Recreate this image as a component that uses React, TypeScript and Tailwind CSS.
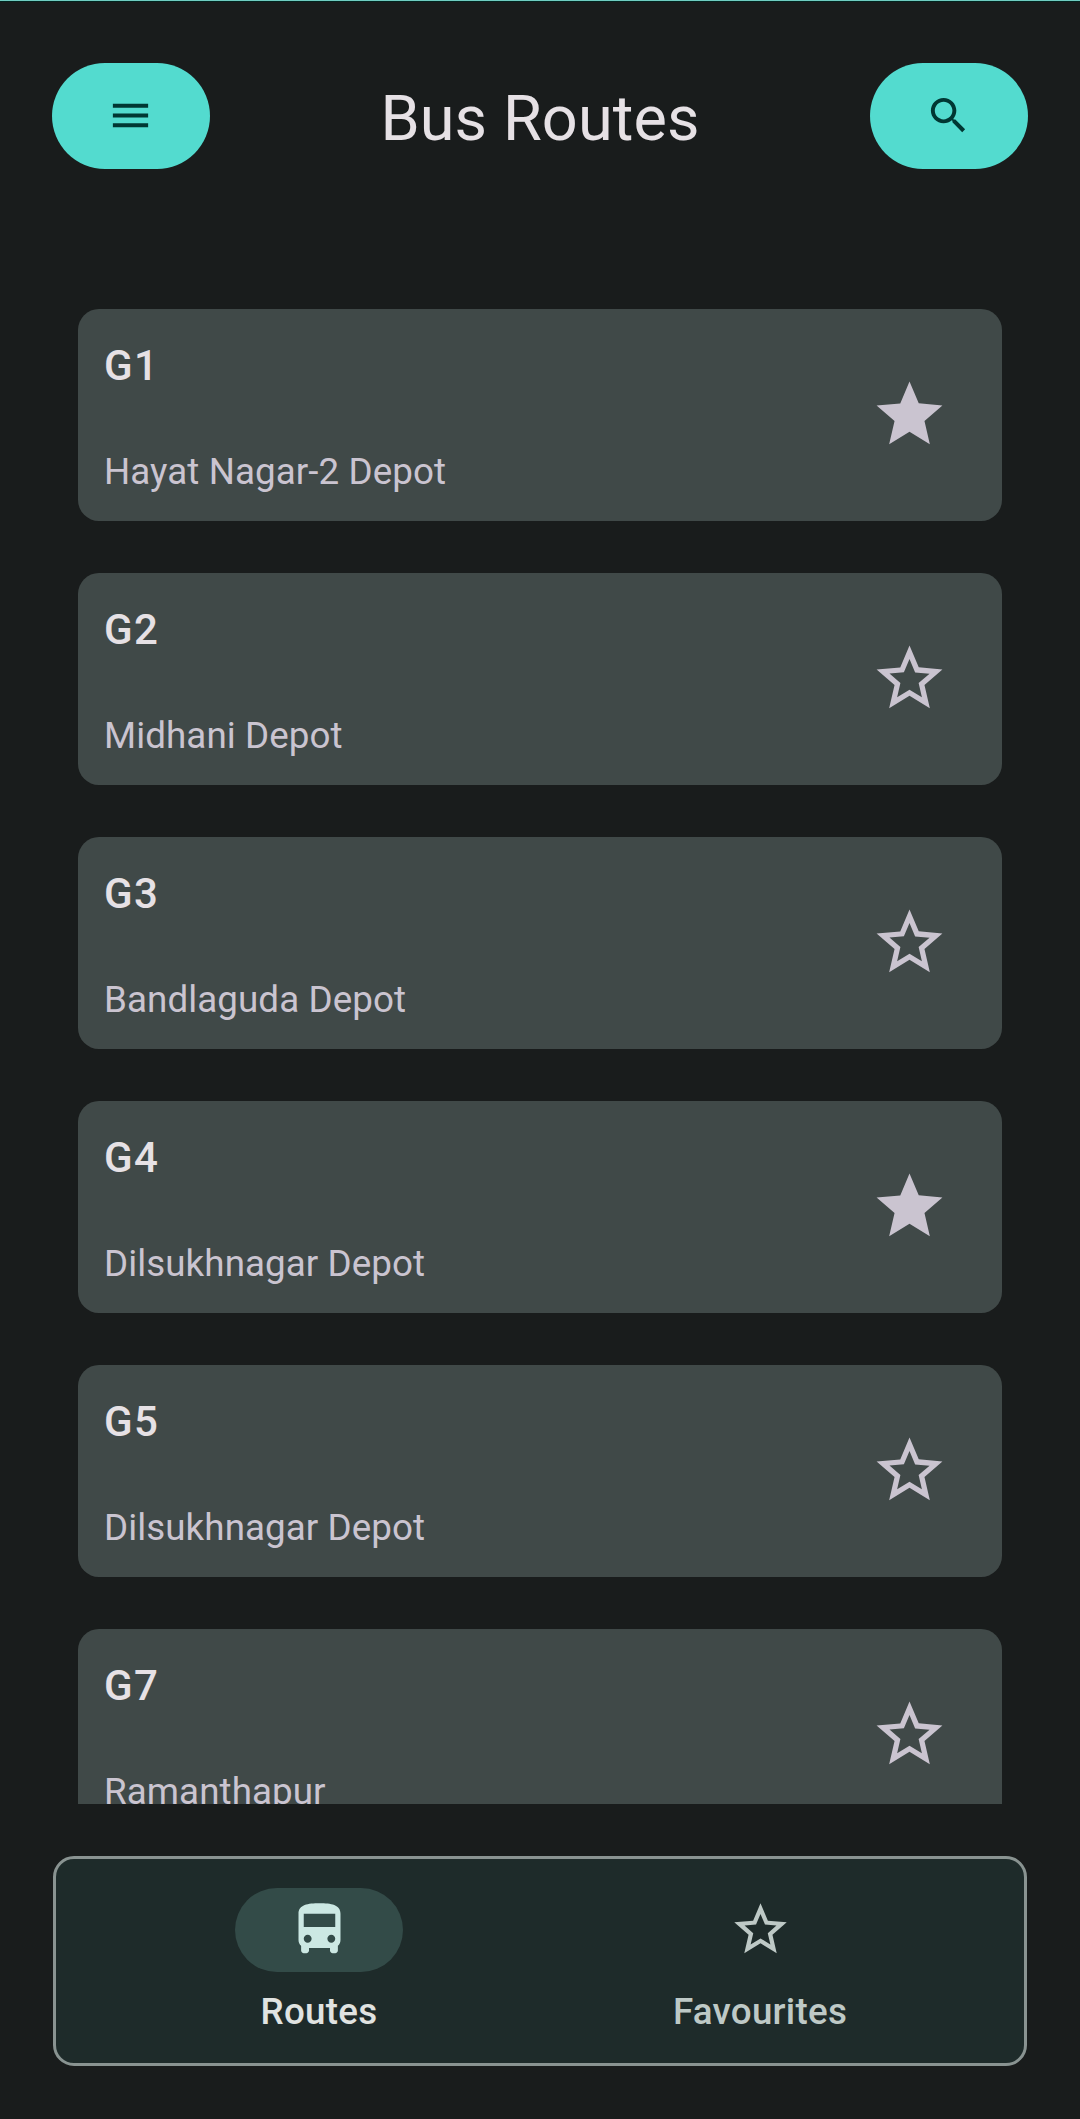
import React from "react";

const STAR =
  "M12 17.27L18.18 21l-1.63-7.03L22 9.24l-7.19-.62L12 2 9.19 8.63 2 9.24l5.46 4.73L5.82 21z";
const STAR_OUTLINE =
  "M22 9.24l-7.19-.62L12 2 9.19 8.63 2 9.24l5.46 4.73L5.82 21 12 17.27 18.18 21l-1.63-7.03L22 9.24zM12 15.4l-3.76 2.27 1-4.28-3.32-2.88 4.38-.38L12 6.1l1.71 4.04 4.38.38-3.32 2.88 1 4.28L12 15.4z";
const MENU = "M3 18h18v-2H3v2zm0-5h18v-2H3v2zm0-7v2h18V6H3z";
const SEARCH =
  "M15.5 14h-.79l-.28-.27C15.41 12.59 16 11.11 16 9.5 16 5.91 13.09 3 9.5 3S3 5.91 3 9.5 5.91 16 9.5 16c1.61 0 3.09-.59 4.23-1.57l.27.28v.79l5 4.99L20.49 19l-4.99-5zm-6 0C7.01 14 5 11.99 5 9.5S7.01 5 9.5 5 14 7.01 14 9.5 11.99 14 9.5 14z";
const BUS =
  "M4 16c0 .88.39 1.67 1 2.22V20c0 .55.45 1 1 1h1c.55 0 1-.45 1-1v-1h8v1c0 .55.45 1 1 1h1c.55 0 1-.45 1-1v-1.78c.61-.55 1-1.34 1-2.22V6c0-3.5-3.58-4-8-4s-8 .5-8 4v10zm3.5 1c-.83 0-1.5-.67-1.5-1.5S6.67 14 7.5 14s1.5.67 1.5 1.5S8.33 17 7.5 17zm9 0c-.83 0-1.5-.67-1.5-1.5s.67-1.5 1.5-1.5 1.5.67 1.5 1.5-.67 1.5-1.5 1.5zm1.5-6H6V6h12v5z";

function Icon({ d, className }: { d: string; className: string }) {
  return (
    <svg viewBox="0 0 24 24" fill="currentColor" className={className} aria-hidden="true">
      <path d={d} />
    </svg>
  );
}

const routes = [
  { code: "G1", depot: "Hayat Nagar-2 Depot", favourite: true },
  { code: "G2", depot: "Midhani Depot", favourite: false },
  { code: "G3", depot: "Bandlaguda Depot", favourite: false },
  { code: "G4", depot: "Dilsukhnagar Depot", favourite: true },
  { code: "G5", depot: "Dilsukhnagar Depot", favourite: false },
  { code: "G7", depot: "Ramanthapur", favourite: false },
];

function RouteCard({ code, depot, favourite }: (typeof routes)[number]) {
  return (
    <li className="flex h-[212px] shrink-0 items-center justify-between rounded-[21px] bg-[#404948] pr-[53px] pl-[26px]">
      <div className="flex h-full flex-col justify-between pt-[25px] pb-[23px]">
        <h2 className="text-[42px] leading-[63px] font-medium tracking-[1.3px] text-[#e6e1e5]">{code}</h2>
        <p className="text-[36.75px] leading-[52px] tracking-[0.08px] whitespace-nowrap text-[#cac4d0]">{depot}</p>
      </div>
      <button aria-label="Favourite" className="pb-[2px]">
        <Icon d={favourite ? STAR : STAR_OUTLINE} className="size-[79px] text-[#cac4d0]" />
      </button>
    </li>
  );
}

function RoundButton({ d, label }: { d: string; label: string }) {
  return (
    <button
      aria-label={label}
      className="flex h-[106px] w-[158px] items-center justify-center rounded-full bg-[#53dbcf] pr-px pb-px text-[#003733]"
    >
      <Icon d={d} className="size-[47px]" />
    </button>
  );
}

export default function App() {
  return (
    <div className="flex h-[2119px] w-[1080px] flex-col overflow-hidden border-t border-[#6fcdc1] bg-[#191c1c] font-['Roboto',sans-serif]">
      <div className="h-px shrink-0 bg-[#02241f]" />
      <header className="mx-[52px] mt-[61px] flex h-[106px] shrink-0 items-center justify-between">
        <RoundButton d={MENU} label="Menu" />
        <h1 className="pt-[5px] text-[63px] leading-[84px] tracking-[0.1px] text-[#e6e1e5]">Bus Routes</h1>
        <RoundButton d={SEARCH} label="Search" />
      </header>

      <ul className="mx-[78px] mt-[140px] flex h-[1495px] shrink-0 flex-col gap-[52px] overflow-hidden">
        {routes.map((route) => (
          <RouteCard key={route.code} {...route} />
        ))}
      </ul>

      <nav className="mx-[53px] mt-[52px] flex h-[210px] shrink-0 justify-center gap-[21px] rounded-[21px] border-[3px] border-[#899391] bg-[#1e2b2a] pt-[29px] pr-px">
        <a className="flex w-[420px] flex-col items-center text-[#e0e3e1]">
          <span className="flex h-[84px] w-[168px] items-center justify-center rounded-full bg-[#334b48] pb-px text-[#cce8e3]">
            <Icon d={BUS} className="size-[63px]" />
          </span>
          <span className="mt-[14px] text-[36.75px] leading-[52px] font-medium tracking-[0.26px]">Routes</span>
        </a>
        <a className="flex w-[420px] flex-col items-center text-[#bec9c6]">
          <span className="flex h-[84px] w-[168px] items-center justify-center pb-px">
            <Icon d={STAR_OUTLINE} className="size-[63px]" />
          </span>
          <span className="mt-[14px] text-[36.75px] leading-[52px] font-medium tracking-[0.26px]">Favourites</span>
        </a>
      </nav>
    </div>
  );
}
